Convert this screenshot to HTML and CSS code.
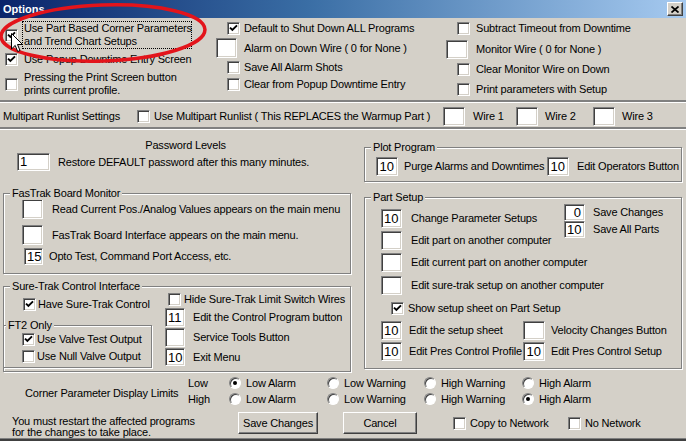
FILE: index.html
```html
<!DOCTYPE html>
<html lang="en">
<head>
<meta charset="utf-8">
<title>Options</title>
<link rel="stylesheet" href="styles.css">
</head>
<body>
<div class="win">
  <div class="title">
    <span class="ttext">Options</span>
    <span class="close"><svg width="8" height="7" viewBox="0 0 8 7"><path d="M0.5 0.5 L7.5 6.5 M7.5 0.5 L0.5 6.5" stroke="#000" stroke-width="1.7"/></svg></span>
  </div>

  <div class="top">
    <div class="col c1">
      <div class="r r1"><span class="cb"><svg viewBox="0 0 9 9" width="9" height="9"><path d="M1 3.6 L3.4 6 L8 1.4" fill="none" stroke="#000" stroke-width="1.9"/></svg></span><span class="focus">Use Part Based Corner Parameters<br>and Trend Chart Setups</span></div>
      <div class="r r2"><span class="cb"><svg viewBox="0 0 9 9" width="9" height="9"><path d="M1 3.6 L3.4 6 L8 1.4" fill="none" stroke="#000" stroke-width="1.9"/></svg></span><span class="lb">Use Popup Downtime Entry Screen</span></div>
      <div class="r r3"><span class="cb"></span><span class="lb">Pressing the Print Screen button<br>prints current profile.</span></div>
    </div>
    <div class="col c2">
      <div class="r ra"><span class="cb"><svg viewBox="0 0 9 9" width="9" height="9"><path d="M1 3.6 L3.4 6 L8 1.4" fill="none" stroke="#000" stroke-width="1.9"/></svg></span><span class="lb">Default to Shut Down ALL Programs</span></div>
      <div class="r rb"><span class="tb"></span><span class="lb">Alarm on Down Wire ( 0 for None )</span></div>
      <div class="r rc"><span class="cb"></span><span class="lb">Save All Alarm Shots</span></div>
      <div class="r rd"><span class="cb"></span><span class="lb">Clear from Popup Downtime Entry</span></div>
    </div>
    <div class="col c3">
      <div class="r ra"><span class="cb"></span><span class="lb">Subtract Timeout from Downtime</span></div>
      <div class="r rb"><span class="tb"></span><span class="lb">Monitor Wire ( 0 for None )</span></div>
      <div class="r rc"><span class="cb"></span><span class="lb">Clear Monitor Wire on Down</span></div>
      <div class="r rd"><span class="cb"></span><span class="lb">Print parameters with Setup</span></div>
    </div>
  </div>

  <div class="sep"></div>

  <div class="multi">
    <span class="mtitle">Multipart Runlist Settings</span>
    <span class="cb"></span>
    <span class="lb mlabel">Use Multipart Runlist ( This REPLACES the Warmup Part )</span>
    <span class="tb wtb"></span><span class="lb w1">Wire 1</span>
    <span class="tb wtb"></span><span class="lb w2">Wire 2</span>
    <span class="tb wtb"></span><span class="lb w3">Wire 3</span>
  </div>

  <div class="sep"></div>

  <div class="main">
    <div class="left">
      <div class="pw-title">Password Levels</div>
      <div class="r pw-row"><span class="tb pwtb">1</span><span class="lb">Restore DEFAULT password after this many minutes.</span></div>

      <div class="grp fast">
        <span class="glabel">FasTrak Board Monitor</span>
        <div class="r f1"><span class="tb"></span><span class="lb">Read Current Pos./Analog Values appears on the main menu</span></div>
        <div class="r f2"><span class="tb"></span><span class="lb">FasTrak Board Interface appears on the main menu.</span></div>
        <div class="r f3"><span class="tb small">15</span><span class="lb">Opto Test, Command Port Access, etc.</span></div>
      </div>

      <div class="grp sure">
        <span class="glabel">Sure-Trak Control Interface</span>
        <div class="sleft">
          <div class="r have"><span class="cb"><svg viewBox="0 0 9 9" width="9" height="9"><path d="M1 3.6 L3.4 6 L8 1.4" fill="none" stroke="#000" stroke-width="1.9"/></svg></span><span class="lb">Have Sure-Trak Control</span></div>
          <div class="grp ft2">
            <span class="glabel">FT2 Only</span>
            <div class="r v1"><span class="cb"><svg viewBox="0 0 9 9" width="9" height="9"><path d="M1 3.6 L3.4 6 L8 1.4" fill="none" stroke="#000" stroke-width="1.9"/></svg></span><span class="lb">Use Valve Test Output</span></div>
            <div class="r v2"><span class="cb"></span><span class="lb">Use Null Valve Output</span></div>
          </div>
        </div>
        <div class="sright">
          <div class="r hide"><span class="cb"></span><span class="lb">Hide Sure-Trak Limit Switch Wires</span></div>
          <div class="r s1"><span class="tb">11</span><span class="lb">Edit the Control Program button</span></div>
          <div class="r s2"><span class="tb"></span><span class="lb">Service Tools Button</span></div>
          <div class="r s3"><span class="tb">10</span><span class="lb">Exit Menu</span></div>
        </div>
      </div>
    </div>

    <div class="right">
      <div class="grp plot">
        <span class="glabel">Plot Program</span>
        <div class="r prow"><span class="tb">10</span><span class="lb purge">Purge Alarms and Downtimes</span><span class="tb">10</span><span class="lb eob">Edit Operators Button</span></div>
      </div>

      <div class="grp part">
        <span class="glabel">Part Setup</span>
        <div class="ptop">
          <div class="pstack">
            <div class="r p1"><span class="tb">10</span><span class="lb">Change Parameter Setups</span></div>
            <div class="r p2"><span class="tb"></span><span class="lb">Edit part on another computer</span></div>
            <div class="r p3"><span class="tb"></span><span class="lb">Edit current part on another computer</span></div>
            <div class="r p4"><span class="tb"></span><span class="lb">Edit sure-trak setup on another computer</span></div>
          </div>
          <div class="save">
            <div class="r"><span class="tb st">0</span><span class="lb">Save Changes</span></div>
            <div class="r"><span class="tb st">10</span><span class="lb">Save All Parts</span></div>
          </div>
        </div>
        <div class="r show"><span class="cb"><svg viewBox="0 0 9 9" width="9" height="9"><path d="M1 3.6 L3.4 6 L8 1.4" fill="none" stroke="#000" stroke-width="1.9"/></svg></span><span class="lb">Show setup sheet on Part Setup</span></div>
        <div class="pgrid">
          <span class="tb">10</span><span class="lb">Edit the setup sheet</span><span class="tb"></span><span class="lb">Velocity Changes Button</span>
          <span class="tb">10</span><span class="lb">Edit Pres Control Profile</span><span class="tb">10</span><span class="lb">Edit Pres Control Setup</span>
        </div>
      </div>
    </div>
  </div>

  <div class="limits">
    <span class="ltitle">Corner Parameter Display Limits</span>
    <span class="lh">Low</span>
    <span class="rd"><span class="radio on"></span><span class="lb">Low Alarm</span></span>
    <span class="rd"><span class="radio"></span><span class="lb">Low Warning</span></span>
    <span class="rd"><span class="radio"></span><span class="lb">High Warning</span></span>
    <span class="rd"><span class="radio"></span><span class="lb">High Alarm</span></span>
    <span class="lh">High</span>
    <span class="rd"><span class="radio"></span><span class="lb">Low Alarm</span></span>
    <span class="rd"><span class="radio"></span><span class="lb">Low Warning</span></span>
    <span class="rd"><span class="radio"></span><span class="lb">High Warning</span></span>
    <span class="rd"><span class="radio on"></span><span class="lb">High Alarm</span></span>
  </div>

  <div class="act">
    <div class="note">You must restart the affected programs<br>for the changes to take place.</div>
    <span class="btn save-btn">Save Changes</span>
    <span class="btn cancel-btn">Cancel</span>
    <span class="cb net1"></span><span class="lb netl1">Copy to Network</span>
    <span class="cb"></span><span class="lb netl2">No Network</span>
  </div>

  <div class="edge"></div>

  <svg class="ink" width="230" height="75" viewBox="0 0 230 75"><ellipse cx="103" cy="33" rx="102" ry="28" transform="rotate(-2 103 33)" fill="none" stroke="#e3141b" stroke-width="3.5"/></svg>
  <svg class="cursor" width="13" height="20" viewBox="0 0 13 20"><path d="M0.5 0.5 L0.5 16 L4.2 12.4 L6.7 18.5 L9 17.5 L6.5 11.5 L11.5 11.5 Z" fill="#fff" stroke="#000" stroke-width="1"/></svg>
</div>
</body>
</html>
```

FILE: styles.css
```css
* { box-sizing: border-box; }
html, body { margin: 0; padding: 0; }
body {
  width: 686px;
  height: 441px;
  overflow: hidden;
  background: #d4d0c8;
  font: 11px/13px "Liberation Sans", Arial, sans-serif;
  letter-spacing: -0.18px;
  color: #000;
}
.win {
  position: relative;
  width: 686px;
  height: 441px;
  display: flex;
  flex-direction: column;
}

/* title bar */
.title {
  height: 18px;
  flex: none;
  background: linear-gradient(90deg, #0a246a 0%, #3a6ea5 45%, #a6caf0 100%);
  display: flex;
  align-items: center;
  justify-content: space-between;
  padding: 0 3px 0 3px;
  color: #fff;
  font-weight: bold;
  letter-spacing: 0;
}
.close {
  width: 16px;
  height: 14px;
  background: #d4d0c8;
  border: 1px solid;
  border-color: #fff #404040 #404040 #fff;
  box-shadow: inset -1px -1px #808080;
  display: flex;
  align-items: center;
  justify-content: center;
}

/* generic controls */
.r { display: flex; align-items: center; }
.lb { white-space: nowrap; }
.cb {
  width: 13px;
  height: 13px;
  flex: none;
  background: #fff;
  border: 1px solid;
  border-color: #808080 #fff #fff #808080;
  box-shadow: inset 1px 1px #404040, inset -1px -1px #d4d0c8;
  display: flex;
  align-items: center;
  justify-content: center;
}
.cb svg { display: block; }
.tb {
  width: 21px;
  height: 19px;
  flex: none;
  background: #fff;
  border: 1px solid;
  border-color: #808080 #fff #fff #808080;
  box-shadow: inset 1px 1px #404040, inset -1px -1px #d4d0c8;
  font-size: 13px;
  line-height: 17px;
  letter-spacing: 0;
  text-align: right;
  padding: 0 3px 0 2px;
}
.radio {
  width: 12px;
  height: 12px;
  flex: none;
  border-radius: 50%;
  background: #fff;
  border: 1px solid;
  border-color: #808080 #fff #fff #808080;
  box-shadow: inset 1px 1px #404040;
  display: flex;
  align-items: center;
  justify-content: center;
}
.radio.on::after {
  content: "";
  width: 4px;
  height: 4px;
  border-radius: 50%;
  background: #000;
}
.btn {
  display: flex;
  align-items: center;
  justify-content: center;
  height: 22px;
  flex: none;
  border: 1px solid;
  border-color: #fff #404040 #404040 #fff;
  box-shadow: inset -1px -1px #808080;
}

/* top block */
.top {
  display: grid;
  grid-template-columns: 216px 230px 1fr;
  height: 82px;
  flex: none;
}
.c1 { padding-left: 5px; }
.c1 .r1 { margin-top: 3px; }
.focus {
  margin-left: 4px;
  width: 170px;
  border: 1px dotted #000;
  padding: 0 1px;
  white-space: nowrap;
}
.c1 .r2 { margin-top: 4px; height: 13px; }
.c1 .r2 .lb, .c1 .r3 .lb { margin-left: 6px; }
.c1 .r3 { margin-top: 5px; }

.c2 .ra { margin-top: 4px; height: 13px; }
.c2 .ra .cb, .c2 .rc .cb, .c2 .rd .cb { margin-left: 11px; }
.c2 .ra .lb, .c2 .rc .lb, .c2 .rd .lb { margin-left: 4px; }
.c2 .rb { margin-top: 3px; }
.c2 .rb .tb { height: 20px; }
.c2 .rb .lb { margin-left: 7px; }
.c2 .rc { margin-top: 3px; height: 13px; }
.c2 .rd { margin-top: 4px; height: 13px; }

.c3 .ra { margin-top: 4px; height: 13px; }
.c3 .ra .cb, .c3 .rc .cb, .c3 .rd .cb { margin-left: 11px; }
.c3 .ra .lb, .c3 .rc .lb, .c3 .rd .lb { margin-left: 6px; }
.c3 .rb { margin-top: 5px; }
.c3 .rb .tb { width: 22px; }
.c3 .rb .lb { margin-left: 8px; }
.c3 .rc { margin-top: 4px; height: 13px; }
.c3 .rd { margin-top: 7px; height: 13px; }

.sep {
  height: 3px;
  flex: none;
  border-top: 2px solid #808080;
  border-bottom: 1px solid #fff;
}

/* multipart */
.multi {
  display: flex;
  align-items: center;
  height: 24px;
  flex: none;
  padding: 3px 0 0 3px;
}
.mtitle { width: 134px; white-space: nowrap; }
.mlabel { margin-left: 4px; width: 289px; }
.wtb { width: 22px; }
.w1 { margin-left: 8px; width: 43px; }
.w2 { margin-left: 7px; width: 48px; }
.w3 { margin-left: 7px; }

/* main */
.main { display: flex; flex: none; }
.left { width: 351px; padding-left: 3px; flex: none; }
.pw-title { margin-top: 9px; padding-left: 17px; text-align: center; }
.pw-row { margin-top: 1px; padding-left: 14px; }
.pwtb { width: 33px; height: 18px; text-align: left; line-height: 16px; }
.pw-row .lb { margin-left: 8px; }

.grp {
  position: relative;
  border: 1px solid #808080;
  box-shadow: inset 1px 1px #fff, 1px 1px #fff;
}
.glabel {
  position: absolute;
  top: -7px;
  left: 6px;
  padding: 0 2px;
  background: #d4d0c8;
  line-height: 13px;
  white-space: nowrap;
}

.fast { margin-top: 22px; height: 81px; padding: 5px 0 0 18px; }
.fast .tb { height: 20px; }
.fast .f1 .lb, .fast .f2 .lb { margin-left: 9px; }
.fast .f2 { margin-top: 6px; }
.fast .f3 { margin-top: 3px; }
.fast .f3 .tb { width: 19px; height: 17px; margin-left: 2px; line-height: 15px; }
.fast .f3 .lb { margin-left: 6px; }

.sure { margin-top: 12px; height: 86px; display: flex; }
.sleft { width: 161px; flex: none; }
.have { margin-top: 11px; padding-left: 19px; }
.have .lb { margin-left: 2px; }
.ft2 { margin: 14px 0 0 -1px; width: 149px; height: 43px; padding: 7px 0 0 18px; }
.ft2 .glabel { left: 2px; }
.ft2 .lb { margin-left: 2px; }
.ft2 .v2 { margin-top: 4px; }
.sright { flex: 1; }
.hide { margin-top: 6px; padding-left: 3px; }
.hide .lb { margin-left: 3px; }
.sright .tb { width: 20px; }
.sright .s1 { margin-top: 2px; }
.sright .s2, .sright .s3 { margin-top: 1px; }
.sright .s3 .tb { height: 18px; }
.s1 .lb, .s2 .lb, .s3 .lb { margin-left: 8px; }

.right { margin-left: 13px; width: 318px; flex: none; }
.plot { margin-top: 17px; height: 35px; }
.prow { width: 314px; overflow: hidden; padding: 9px 0 0 11px; }
.prow .tb { width: 22px; }
.purge { margin-left: 6px; width: 146px; }
.eob { margin-left: 8px; }

.part { margin-top: 15px; height: 172px; }
.ptop { display: flex; }
.pstack { width: 199px; flex: none; padding: 11px 0 0 16px; }
.pstack .lb { margin-left: 9px; }
.pstack .p2, .pstack .p3 { margin-top: 3px; }
.pstack .p4 { margin-top: 4px; }
.save { margin-top: 6px; }
.save .st { height: 17px; line-height: 15px; }
.save .lb { margin-left: 8px; }
.show { margin-top: 7px; padding-left: 26px; }
.show .lb { margin-left: 4px; }
.pgrid {
  display: grid;
  grid-template-columns: 21px 121px 22px auto;
  grid-auto-rows: 19px;
  row-gap: 2px;
  align-items: center;
  margin-top: 6px;
  padding-left: 16px;
}
.pgrid .lb { padding-left: 7px; }
.pgrid .tb:nth-child(3), .pgrid .tb:nth-child(7) { width: 22px; }
.pgrid .lb:nth-child(4), .pgrid .lb:nth-child(8) { padding-left: 6px; }

/* limits */
.limits {
  display: grid;
  grid-template-columns: 186px 43px 98px 97px 98px 1fr;
  grid-template-rows: 16px 16px;
  margin-top: 3px;
  flex: none;
}
.ltitle {
  grid-row: 1 / span 2;
  padding: 12px 0 0 25px;
  white-space: nowrap;
}
.lh { display: flex; align-items: center; padding-left: 2px; }
.rd { display: flex; align-items: center; }
.rd .lb { margin-left: 5px; }

.act { display: flex; margin-top: 5px; flex: none; }
.note { width: 238px; flex: none; padding: 4px 0 0 12px; line-height: 11px; white-space: nowrap; }
.save-btn { width: 80px; }
.cancel-btn { width: 74px; margin-left: 25px; }
.act .cb { margin-top: 5px; }
.net1 { margin-left: 36px; }
.netl1, .netl2 { margin: 5px 0 0 4px; }
.netl1 { width: 98px; }

.edge {
  margin-top: auto;
  height: 3px;
  flex: none;
  border-top: 1px solid #808080;
  background: #404040;
}

/* overlays: red annotation and mouse pointer */
.ink { position: absolute; left: 0; top: 0; pointer-events: none; }
.cursor { position: absolute; left: 11px; top: 33px; pointer-events: none; }
```
